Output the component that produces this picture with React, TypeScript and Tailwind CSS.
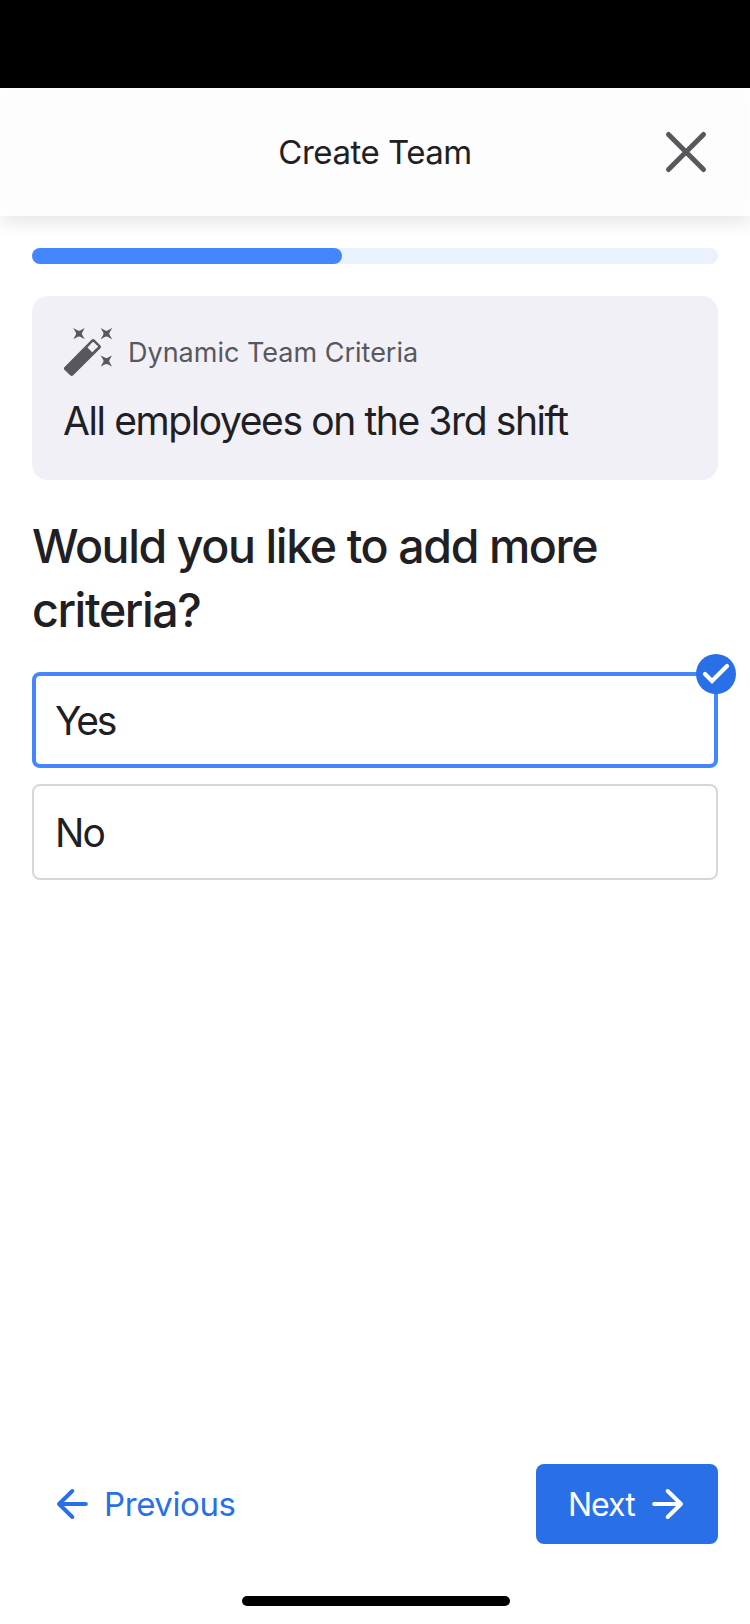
import React from "react";

function ArrowIcon({ flip = false }: { flip?: boolean }) {
  return (
    <svg
      viewBox="0 0 32 32"
      className={flip ? "h-8 w-8 shrink-0 rotate-180" : "h-8 w-8 shrink-0"}
      fill="none"
      stroke="currentColor"
      strokeWidth="4"
      strokeLinecap="round"
      strokeLinejoin="round"
    >
      <path d="M2.2 16H29M15.7 3L29 16L15.7 29" />
    </svg>
  );
}

function WandIcon() {
  return (
    <svg viewBox="0 0 48 48" className="h-12 w-12 shrink-0" fill="#58575c">
      <path
        fillRule="evenodd"
        d="M0.6 39L27.5 11.8Q29.1 10.2 30.7 11.8L36.2 17.3Q37.8 18.8 36.2 20.4L9.2 47.2Q7.7 48.7 6.2 47.2L0.6 42Q-0.8 40.6 0.6 39ZM23.5 19.6L28.2 24.3L34 18.8Q34.2 18.5 34 18.3L29.5 14.1Q29.1 13.7 28.7 14.1Z"
      />
      {["translate(15 5.6)", "translate(42.4 5.6)", "translate(42.4 33)"].map((t) => (
        <path key={t} transform={t} d="M-5.7-5.6L-1.2-3.2Q0-2.6 1.2-3.2L5.7-5.6L3.2-1.2Q2.6 0 3.2 1.2L5.7 5.6L1.2 3.2Q0 2.6-1.2 3.2L-5.7 5.6L-3.2 1.2Q-2.6 0-3.2-1.2Z" />
      ))}
    </svg>
  );
}

export default function App() {
  return (
    <div className="flex h-[1624px] w-[750px] flex-col overflow-hidden bg-white font-['Inter',sans-serif] text-[#202024]">
      <div className="relative z-10 h-[88px] shrink-0 bg-black" />
      <header className="grid h-32 shrink-0 grid-cols-[1fr_auto_1fr] items-center bg-[#fdfdfd] px-[42px] shadow-[0_8px_16px_rgba(0,0,0,0.09),inset_0_0_12px_#fff]">
        <span />
        <h1 className="text-[33px] leading-10 tracking-[-0.5px]">Create Team</h1>
        <button aria-label="Close" className="justify-self-end text-[#58575c]">
          <svg viewBox="0 0 44 44" className="h-11 w-11" fill="none" stroke="currentColor" strokeWidth="5" strokeLinecap="round">
            <path d="M4.5 4.5L39.5 39.5M39.5 4.5L4.5 39.5" />
          </svg>
        </button>
      </header>

      <main className="flex flex-1 flex-col px-8 pt-8">
        <div className="h-4 rounded-full bg-[#eaf1ff]">
          <div className="h-4 w-[310px] rounded-full bg-[#4486fd]" />
        </div>

        <section className="mt-8 h-[184px] rounded-2xl bg-[#f1f0f6] px-8 pt-8">
          <div className="flex items-center gap-4">
            <WandIcon />
            <span className="pt-0.5 text-[27px] leading-8 text-[#58575c]">Dynamic Team Criteria</span>
          </div>
          <p className="-ml-px mt-[21px] text-[39px] leading-12 tracking-[-1.4px]">All employees on the 3rd shift</p>
        </section>

        <h2 className="mt-[34px] text-[46.5px] font-medium leading-16 tracking-[-1.4px]">
          Would you like to add more criteria?
        </h2>

        <div className="mt-[30px] flex flex-col gap-4">
          <button className="relative flex h-24 items-center rounded-lg border-4 border-[#4486fd] px-[19px] pt-0.5 text-left text-[39px] leading-12 tracking-[-2.2px]">
            Yes
            <span className="absolute -right-[22px] -top-[22px] h-10 w-10 rounded-full bg-[#2970e8]">
              <svg viewBox="0 0 40 40" className="h-10 w-10" fill="none" stroke="#fff" strokeWidth="4.2" strokeLinecap="round">
                <path d="M9 20L16 27L31 12" strokeLinejoin="miter" />
              </svg>
            </span>
          </button>
          <button className="flex h-24 items-center rounded-lg border-2 border-[#d7d6dc] px-[21px] pt-0.5 text-left text-[39px] leading-12 tracking-[-2px]">
            No
          </button>
        </div>
      </main>

      <footer className="flex shrink-0 flex-col items-center px-8 pb-[18px]">
        <div className="flex w-full items-center justify-between">
          <button className="flex h-20 items-center gap-4 px-6 text-[33px] leading-10 tracking-[-0.4px] text-[#2970e8]">
            <ArrowIcon flip />
            <span>Previous</span>
          </button>
          <button className="flex h-20 w-[182px] items-center justify-between rounded-lg bg-[#2970e8] pl-8 pr-[34px] text-[32px] leading-10 tracking-[-1px] text-white">
            <span className="pt-px">Next</span>
            <ArrowIcon />
          </button>
        </div>
        <div className="mt-[52px] ml-0.5 h-2.5 w-[268px] rounded-full bg-black" />
      </footer>
    </div>
  );
}
